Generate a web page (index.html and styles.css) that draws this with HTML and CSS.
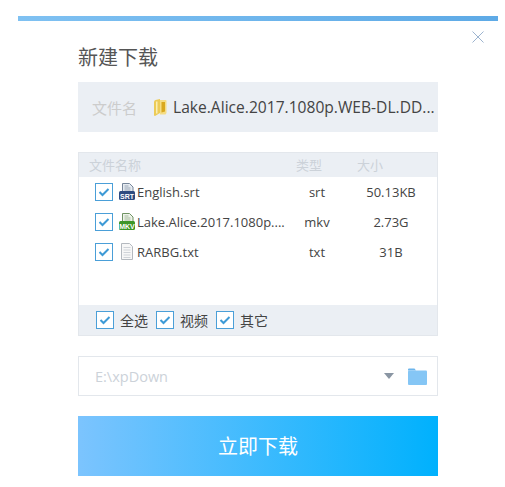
FILE: index.html
```html
<!DOCTYPE html>
<html lang="zh-CN">
  <head>
    <meta charset="UTF-8" />
    <title>新建下载</title>
    <link rel="stylesheet" href="styles.css">
  </head>
  <body>
    <div class="dialog">
      <div class="top-bar"></div>
      <button class="close-btn">
        <svg width="12" height="12" viewBox="0 0 12 12"><path d="M.5.5l11 11M11.5.5l-11 11" stroke="#9db4cf" fill="none"/></svg>
      </button>
      <div class="content">
        <h1 class="title">新建下载</h1>

        <div class="name-box">
          <span class="name-label">文件名</span>
          <svg class="folder-icon" width="14" height="17" viewBox="0 0 14 17">
            <path d="M1 3q0-1.500 1.500-2l4.500-1v14l-5 3q-1 0-1-1z" fill="#eccb57"/>
            <path d="M7 1h5.500q1 0 1 1v12l-1 1.500h-5.500z" fill="#f5dd85"/>
            <path d="M8.500 3h3.500v9.500l-3.500 1z" fill="#d9a81f"/>
            <path d="M3 2.500h1.500v12h-1.500z" fill="#fbeeb0"/>
          </svg>
          <span class="name-text">Lake.Alice.2017.1080p.WEB-DL.DD...</span>
        </div>

        <div class="file-list">
          <div class="list-head">
            <span class="col-name">文件名称</span>
            <span class="col-type">类型</span>
            <span class="col-size">大小</span>
          </div>
          <div class="list-body">
            <div class="file-row">
              <span class="check"><svg width="12" height="10" viewBox="0 0 12 10"><path d="M1.500 5l3 3 6-6" stroke="#3d9ad6" stroke-width="2" fill="none"/></svg></span>
              <svg class="file-icon" width="18" height="18" viewBox="0 0 18 18">
                <path d="M4.500 .5h7l3.500 3.500v6h-10.500z" fill="#e6ebf1" stroke="#76869a"/>
                <path d="M6.500 3h4M6.500 5h6M6.500 7h6" stroke="#9aa7b6"/>
                <rect x="1" y="8" width="16" height="9" rx="1.500" fill="#2d4b80"/>
                <text x="9" y="15.500" class="icon-tag">SRT</text>
              </svg>
              <span class="col-name">English.srt</span>
              <span class="col-type">srt</span>
              <span class="col-size">50.13KB</span>
            </div>
            <div class="file-row">
              <span class="check"><svg width="12" height="10" viewBox="0 0 12 10"><path d="M1.500 5l3 3 6-6" stroke="#3d9ad6" stroke-width="2" fill="none"/></svg></span>
              <svg class="file-icon" width="18" height="18" viewBox="0 0 18 18">
                <path d="M4.500 .5h7l3.500 3.500v6h-10.500z" fill="#eef3ea" stroke="#6f9363"/>
                <path d="M6.500 3h4M6.500 5h6M6.500 7h6" stroke="#a5bb9c"/>
                <rect x="1" y="8" width="16" height="9" rx="1.500" fill="#3c9628"/>
                <text x="9" y="15.500" class="icon-tag">MKV</text>
              </svg>
              <span class="col-name">Lake.Alice.2017.1080p....</span>
              <span class="col-type">mkv</span>
              <span class="col-size">2.73G</span>
            </div>
            <div class="file-row">
              <span class="check"><svg width="12" height="10" viewBox="0 0 12 10"><path d="M1.500 5l3 3 6-6" stroke="#3d9ad6" stroke-width="2" fill="none"/></svg></span>
              <svg class="file-icon" width="18" height="18" viewBox="0 0 18 18">
                <path d="M3.500 .5h8l3 3v13h-11z" fill="#f7f7f7" stroke="#b4b9bf"/>
                <path d="M5.500 4.500h7M5.500 7h7M5.500 9.500h7M5.500 12h7M5.500 14.500h7" stroke="#cfd3d8"/>
              </svg>
              <span class="col-name">RARBG.txt</span>
              <span class="col-type">txt</span>
              <span class="col-size">31B</span>
            </div>
          </div>
          <div class="list-foot">
            <label class="filter"><span class="check"><svg width="12" height="10" viewBox="0 0 12 10"><path d="M1.500 5l3 3 6-6" stroke="#3d9ad6" stroke-width="2" fill="none"/></svg></span>全选</label>
            <label class="filter"><span class="check"><svg width="12" height="10" viewBox="0 0 12 10"><path d="M1.500 5l3 3 6-6" stroke="#3d9ad6" stroke-width="2" fill="none"/></svg></span>视频</label>
            <label class="filter"><span class="check"><svg width="12" height="10" viewBox="0 0 12 10"><path d="M1.500 5l3 3 6-6" stroke="#3d9ad6" stroke-width="2" fill="none"/></svg></span>其它</label>
          </div>
        </div>

        <div class="path-box">
          <span class="path-text">E:\xpDown</span>
          <span class="arrow"></span>
          <svg width="19" height="17" viewBox="0 0 19 17">
            <path d="M0 1.500a1 1 0 0 1 1-1h5.500l1.500 2h-8z" fill="#6db5ec"/>
            <rect x="0" y="2.500" width="19" height="14.500" rx="1" fill="#85c6f5"/>
          </svg>
        </div>

        <button class="download-btn">立即下载</button>
      </div>
    </div>
  </body>
</html>
```

FILE: styles.css
```css
body {
  margin: 0;
  background: #fff;
  font-family: "Open Sans", "Noto Sans CJK SC", sans-serif;
}

.dialog {
  position: relative;
  width: 505px;
  height: 487px;
  padding-top: 16px;
  box-sizing: border-box;
}

.top-bar {
  height: 5px;
  margin: 0 7px 0 18px;
  background: linear-gradient(to right, #7fc1f2, #5eaae6);
}

.close-btn {
  position: absolute;
  left: 472px;
  top: 31px;
  width: 12px;
  height: 12px;
  padding: 0;
  border: 0;
  background: none;
  display: flex;
}

.content {
  width: 360px;
  margin-left: 78px;
}

.title {
  margin: 0;
  padding-top: 23px;
  height: 38px;
  line-height: 28px;
  font-size: 20px;
  font-weight: normal;
  color: #555;
}

.name-box {
  display: flex;
  align-items: center;
  height: 50px;
  padding-left: 14px;
  background: #ebeff4;
}

.name-label {
  width: 61px;
  font-size: 15px;
  color: #ccc;
}

.folder-icon {
  flex: none;
  margin-right: 6px;
}

.name-text {
  font-size: 15.600px;
  color: #444;
  white-space: nowrap;
}

.file-list {
  margin-top: 20px;
  height: 184px;
  border: 1px solid #e3e7ec;
  display: flex;
  flex-direction: column;
  box-sizing: border-box;
}

.list-head {
  display: flex;
  align-items: center;
  height: 24px;
  padding-bottom: 2px;
  box-sizing: border-box;
  background: #ebeff4;
  padding-left: 10px;
  font-size: 13px;
  color: #ccd2d9;
}

.list-head .col-name {
  width: 207px;
}

.list-head .col-type {
  width: 61px;
}

.list-body {
  flex: 1;
}

.file-row {
  display: flex;
  align-items: center;
  height: 30px;
  padding-left: 16px;
  font-size: 13px;
  color: #444;
}

.file-row .check {
  margin-right: 5px;
}

.file-icon {
  flex: none;
  margin-right: 1px;
}

.file-row .col-name {
  flex: none;
  width: 152px;
  margin-right: 6px;
  white-space: nowrap;
}

.file-row .col-type {
  flex: none;
  width: 44px;
  text-align: center;
}

.file-row .col-size {
  flex: none;
  width: 84px;
  margin-left: 10px;
  text-align: center;
}

.check {
  flex: none;
  width: 16px;
  height: 16px;
  border: 1px solid #4a9fd8;
  background: #fff;
  display: flex;
  align-items: center;
  justify-content: center;
}

.icon-tag {
  font-family: "Liberation Sans", sans-serif;
  font-size: 7px;
  font-weight: bold;
  fill: #fff;
  text-anchor: middle;
}

.list-foot {
  display: flex;
  align-items: center;
  gap: 8px;
  height: 30px;
  padding-left: 17px;
  background: #ebeff4;
  font-size: 14px;
  color: #444;
}

.filter {
  display: flex;
  align-items: center;
  gap: 6px;
}

.path-box {
  display: flex;
  align-items: center;
  height: 40px;
  margin-top: 20px;
  padding: 0 10px 0 16px;
  border: 1px solid #e3e7ec;
  box-sizing: border-box;
}

.path-text {
  flex: 1;
  font-size: 14.500px;
  color: #ccd2d9;
}

.arrow {
  width: 0;
  height: 0;
  margin-right: 14px;
  border: 5px solid transparent;
  border-top: 6px solid #8a96a3;
  border-bottom: 0;
}

.download-btn {
  display: block;
  width: 100%;
  height: 60px;
  padding: 0 0 2px;
  margin-top: 20px;
  border: 0;
  background: linear-gradient(to right, #7cc4fe, #00b1fd);
  color: #fff;
  font-family: inherit;
  font-size: 20px;
}
```
